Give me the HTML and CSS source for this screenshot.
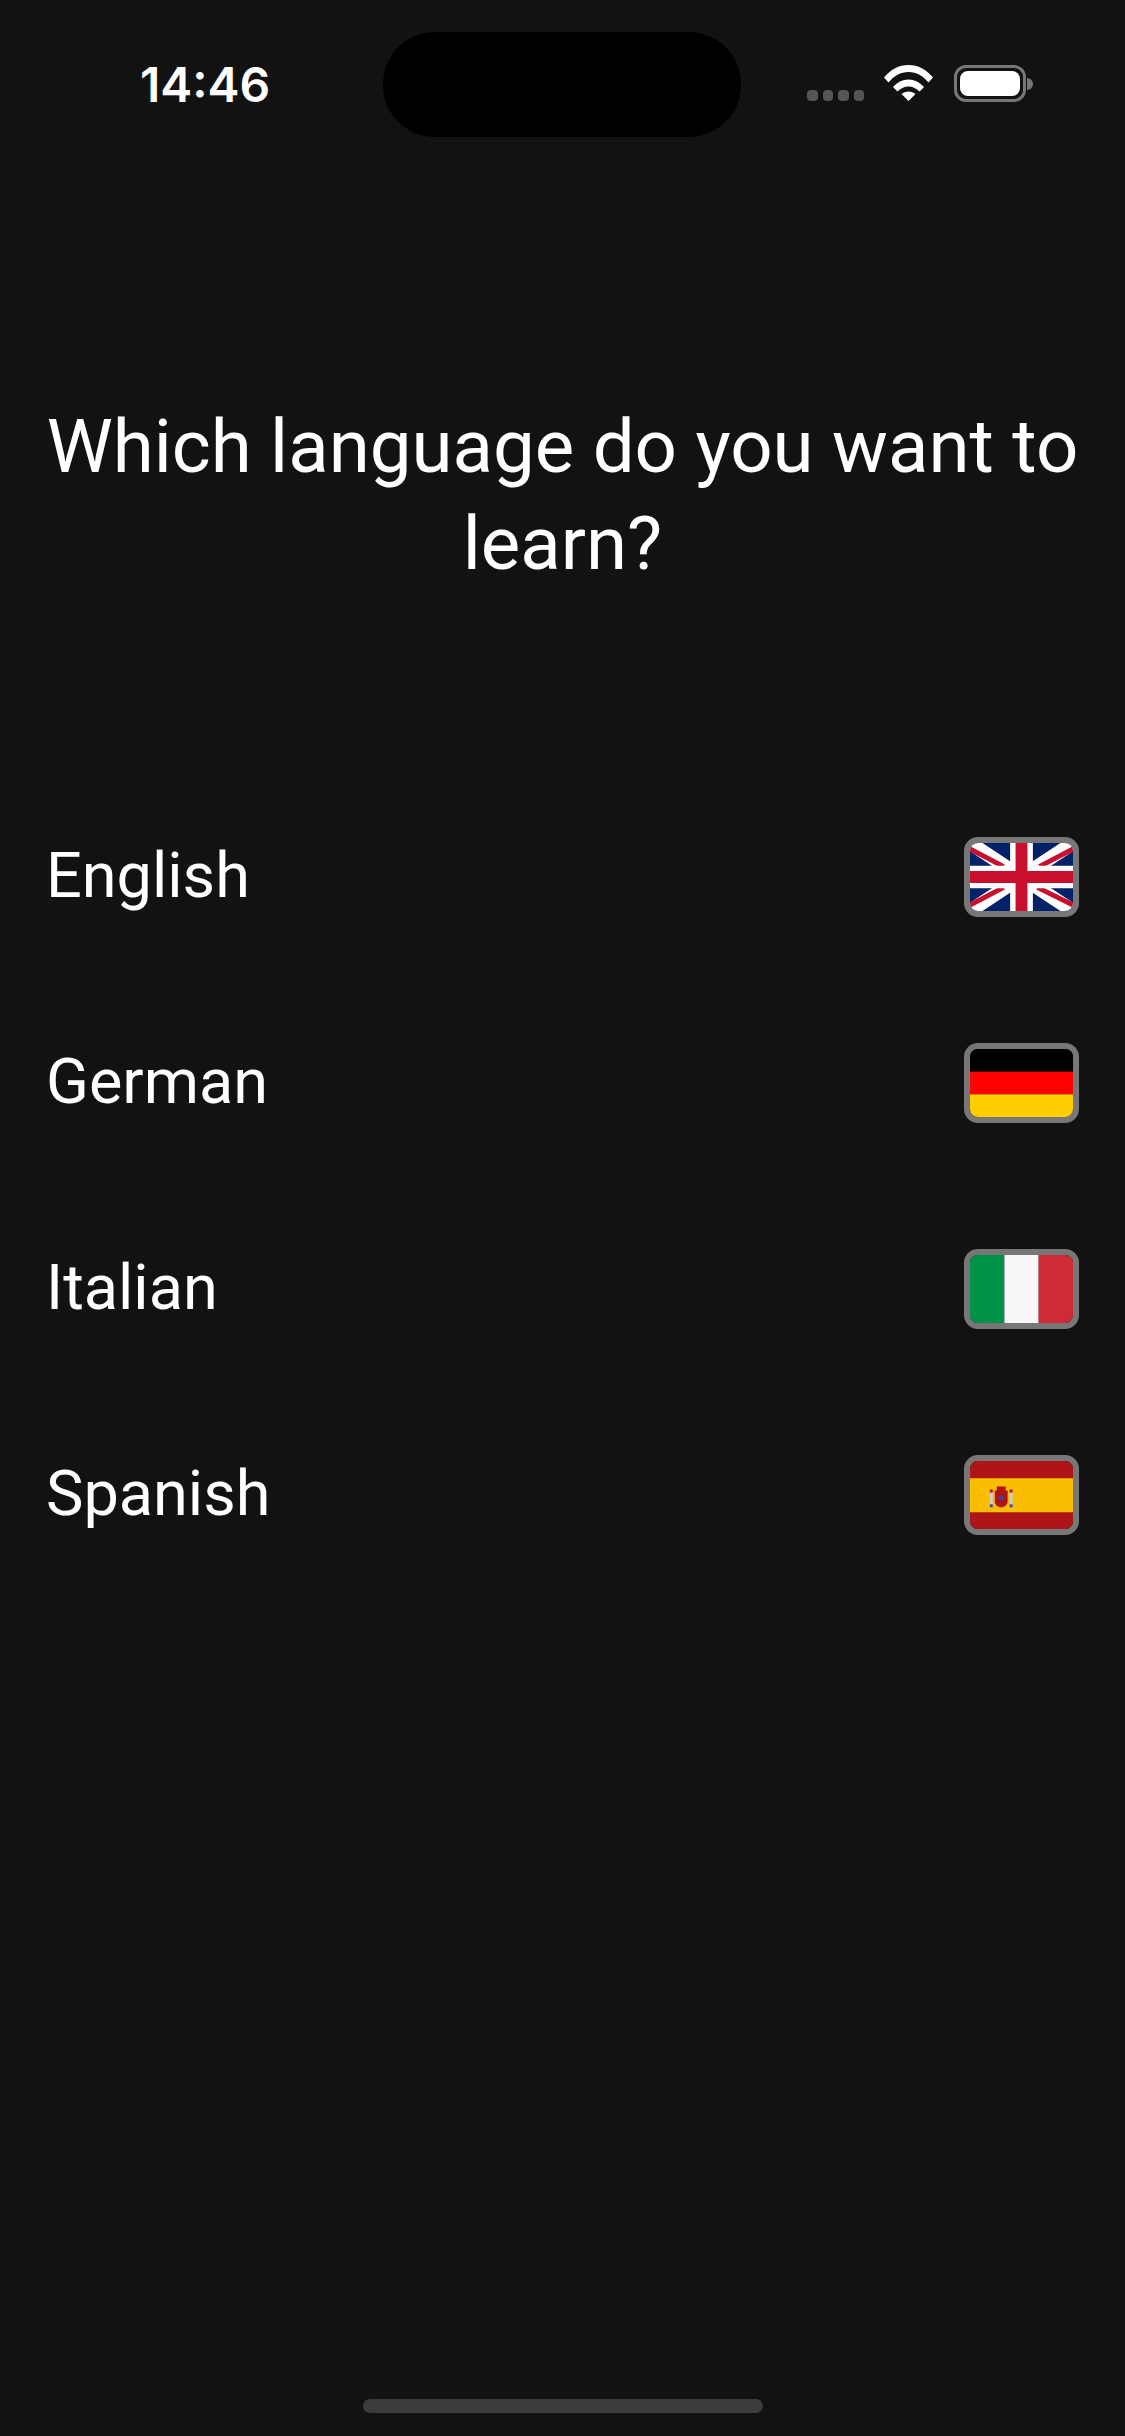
FILE: index.html
```html
<!DOCTYPE html>
<html lang="en">
<head>
<meta charset="utf-8">
<title>Language</title>
<link rel="stylesheet" href="styles.css">
</head>
<body>
<div class="screen">
  <header class="status">
    <span class="time">14:46</span>
    <div class="island"></div>
    <div class="indicators">
      <div class="dots"><i></i><i></i><i></i><i></i></div>
      <svg class="wifi" width="49" height="36" viewBox="0 0 49 36">
        <path fill="#fff" d="M0 12.500 C6.500 4.500 15 0 24.500 0 C34 0 42.500 4.500 49 12.500 L44.500 17.500 C39 11 32.500 7 24.500 7 C16.500 7 10 11 4.500 17.500 Z"/>
        <path fill="#fff" d="M9 22 C13 17.500 18.500 14.500 24.500 14.500 C30.500 14.500 36 17.500 40 22 L35.500 26.500 C32.500 23.500 29 21.500 24.500 21.500 C20 21.500 16.500 23.500 13.500 26.500 Z"/>
        <path fill="#fff" d="M17.500 29 C19.500 27.500 22 26.500 24.500 26.500 C27 26.500 29.500 27.500 31.500 29 L24.500 36 Z"/>
      </svg>
      <div class="battery"><div class="battery-fill"></div></div>
      <div class="battery-nub"></div>
    </div>
  </header>

  <h1 class="title">Which language do you want to learn?</h1>

  <ul class="languages">
    <li class="language">
      <span class="name">English</span>
      <div class="flag">
        <svg viewBox="0 0 104 69" preserveAspectRatio="none">
          <rect width="104" height="69" fill="#012169"/>
          <path d="M0 0 L104 69 M104 0 L0 69" stroke="#fff" stroke-width="14"/>
          <path d="M0 6 L34 24 M104 63 L68 45 M104 6 L70 24 M0 63 L34 45" stroke="#c8102e" stroke-width="5"/>
          <path d="M52 0 V69 M0 34.500 H104" stroke="#fff" stroke-width="23"/>
          <path d="M52 0 V69 M0 34.500 H104" stroke="#c8102e" stroke-width="12"/>
        </svg>
      </div>
    </li>
    <li class="language">
      <span class="name">German</span>
      <div class="flag">
        <svg viewBox="0 0 3 3" preserveAspectRatio="none">
          <rect width="3" height="1" fill="#000"/>
          <rect y="1" width="3" height="1" fill="#f00"/>
          <rect y="2" width="3" height="1" fill="#ffce00"/>
        </svg>
      </div>
    </li>
    <li class="language">
      <span class="name">Italian</span>
      <div class="flag">
        <svg viewBox="0 0 3 3" preserveAspectRatio="none">
          <rect width="1" height="3" fill="#009246"/>
          <rect x="1" width="1" height="3" fill="#f8f8f8"/>
          <rect x="2" width="1" height="3" fill="#ce2b37"/>
        </svg>
      </div>
    </li>
    <li class="language">
      <span class="name">Spanish</span>
      <div class="flag">
        <svg viewBox="0 0 104 69" preserveAspectRatio="none">
          <rect width="104" height="69" fill="#ad1519"/>
          <rect y="17.500" width="104" height="34.500" fill="#fabd00"/>
          <rect x="20" y="30" width="3" height="17" fill="#ccc"/>
          <rect x="40" y="30" width="3" height="17" fill="#ccc"/>
          <rect x="20" y="29" width="3" height="3" fill="#ad1519"/>
          <rect x="40" y="29" width="3" height="3" fill="#ad1519"/>
          <rect x="20" y="44" width="3" height="3" fill="#39489a"/>
          <rect x="40" y="44" width="3" height="3" fill="#39489a"/>
          <path fill="#ad1519" d="M27 26 H36 V30 H38 V41 C38 45 34 47 31.500 47 C29 47 25 45 25 41 V30 H27 Z"/>
          <circle cx="31.500" cy="37.500" r="2.500" fill="#39489a"/>
        </svg>
      </div>
    </li>
  </ul>

  <div class="home-bar"></div>
</div>
</body>
</html>
```
FILE: styles.css
```css
* {
  box-sizing: border-box;
}

html,
body {
  margin: 0;
  padding: 0;
  background: #121212;
}

.screen {
  width: 1125px;
  height: 2436px;
  display: flex;
  flex-direction: column;
  background: #121212;
  color: #fff;
  font-family: Roboto, "Liberation Sans", sans-serif;
  overflow: hidden;
}

.status {
  display: flex;
  align-items: flex-start;
  height: 137px;
  padding-top: 32px;
}

.time {
  width: 383px;
  padding: 28px 0 0 140px;
  font-family: Inter, "Liberation Sans", sans-serif;
  font-size: 48px;
  line-height: 50px;
  font-weight: 600;
  color: #fff;
}

.island {
  width: 358px;
  height: 105px;
  border-radius: 52px;
  background: #000;
}

.indicators {
  display: flex;
  align-items: flex-end;
  height: 70px;
  margin-left: 66px;
}

.dots {
  display: flex;
  gap: 5px;
  margin-bottom: 1px;
}

.dots i {
  display: block;
  width: 10.500px;
  height: 11px;
  border-radius: 4px;
  background: #555;
}

.wifi {
  display: block;
  margin-left: 20px;
  margin-bottom: 1px;
}

.battery {
  width: 72px;
  height: 37px;
  margin-left: 21px;
  padding: 3px;
  border: 3px solid #777;
  border-radius: 12px;
}

.battery-fill {
  width: 100%;
  height: 100%;
  border-radius: 8px;
  background: #fff;
}

.battery-nub {
  width: 6px;
  height: 12px;
  margin-bottom: 12px;
  margin-left: 1px;
  border-radius: 0 6px 6px 0;
  background: #777;
}

.title {
  margin: 0;
  padding: 261px 30px 0;
  font-size: 74.400px;
  line-height: 97px;
  font-weight: 400;
  text-align: center;
}

.languages {
  list-style: none;
  margin: 182px 0 0;
  padding: 0 46px;
}

.language {
  display: flex;
  align-items: center;
  justify-content: space-between;
  height: 206px;
}

.name {
  margin-bottom: 3px;
  font-size: 63px;
  line-height: 74px;
}

.flag {
  width: 115px;
  height: 80px;
  border: 6px solid #777;
  border-radius: 14px;
  overflow: hidden;
}

.flag svg {
  display: block;
  width: 100%;
  height: 100%;
}

.home-bar {
  width: 400px;
  height: 14px;
  margin: auto auto 23px;
  border-radius: 7px;
  background: #3c3c3c;
}
```
